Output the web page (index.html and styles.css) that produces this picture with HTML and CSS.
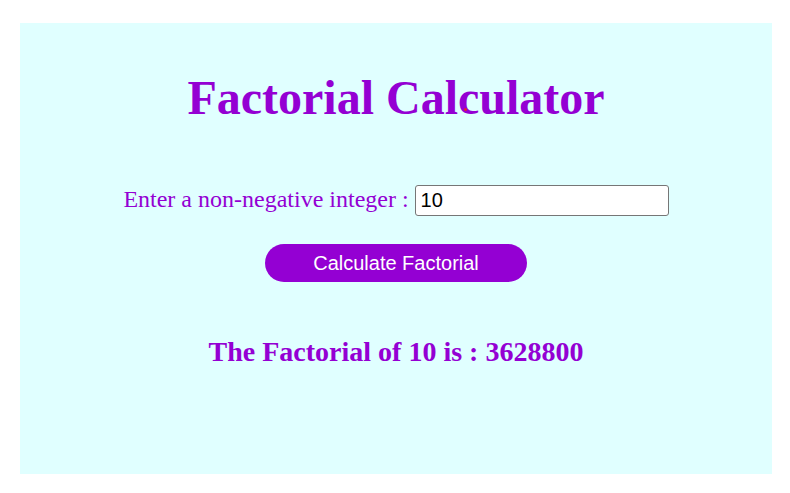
FILE: index.html
```html
<!DOCTYPE html>
<html lang="en">
<head>
<meta charset="utf-8">
<title>Factorial Calculator</title>
<link rel="stylesheet" href="styles.css">
</head>
<body>
<div class="panel">
  <h1 class="title">Factorial Calculator</h1>
  <div class="row">
    <label class="label" for="num">Enter a non-negative integer :</label>
    <input class="input" id="num" type="text" value="10">
  </div>
  <button class="btn" type="button">Calculate Factorial</button>
  <h2 class="result">The Factorial of 10 is : 3628800</h2>
  <span class="dot"></span>
</div>
</body>
</html>
```
FILE: styles.css
```css
html, body {
  margin: 0;
  background: #ffffff;
}
body {
  padding: 23px 18px 0 20px;
}
.panel {
  position: relative;
  box-sizing: border-box;
  width: 752px;
  height: 451px;
  background: #e0ffff;
  text-align: center;
  padding-top: 47px;
  color: #9400d3;
}
.title {
  margin: 0;
  font-family: "Liberation Serif", "Times New Roman", serif;
  font-weight: bold;
  font-size: 48px;
  line-height: 56px;
}
.row {
  display: flex;
  justify-content: center;
  align-items: baseline;
  gap: 6px;
  margin-top: 59px;
}
.label {
  font-family: "Liberation Serif", "Times New Roman", serif;
  font-size: 24px;
}
.input {
  box-sizing: border-box;
  width: 254px;
  height: 31px;
  padding: 3px 5px;
  border: 1px solid #767676;
  border-radius: 3px;
  background: #ffffff;
  font-family: "Liberation Sans", Arial, sans-serif;
  font-size: 20px;
  color: #000000;
  outline: none;
}
.btn {
  display: block;
  margin: 28px auto 0;
  width: 262px;
  height: 38px;
  padding: 0;
  border: none;
  border-radius: 19px;
  background: #9400d3;
  color: #ffffff;
  font-family: "Liberation Sans", Arial, sans-serif;
  font-size: 20px;
  line-height: 38px;
}
.result {
  margin: 54px 0 0;
  font-family: "Liberation Serif", "Times New Roman", serif;
  font-weight: bold;
  font-size: 28px;
  line-height: 32px;
}
.dot {
  position: absolute;
  left: 444px;
  top: 85px;
  width: 3px;
  height: 3px;
  border-radius: 50%;
  background: #e8202a;
}
```
